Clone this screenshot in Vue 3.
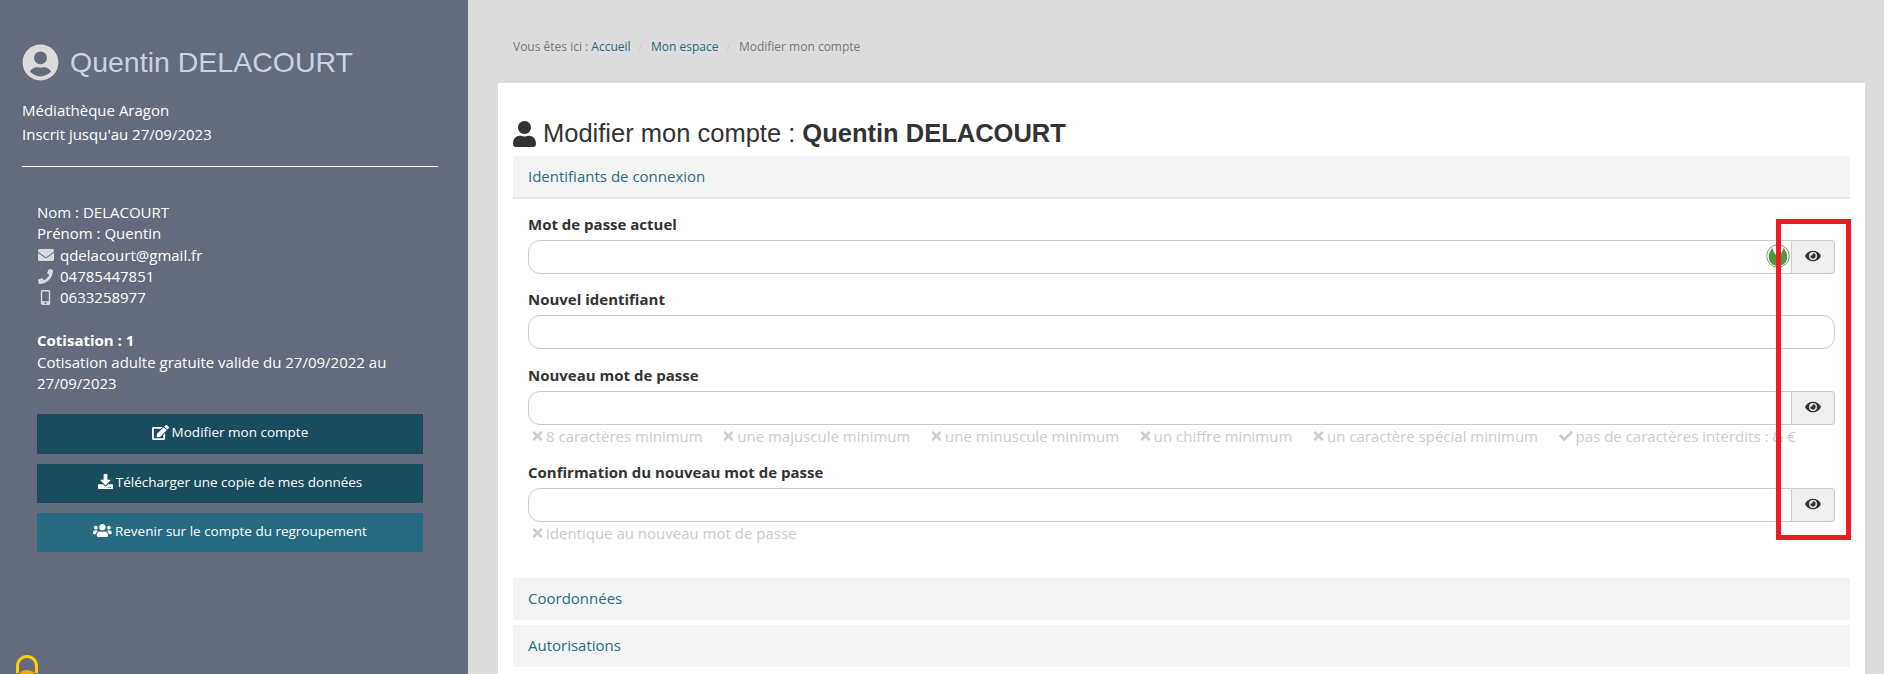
<script setup>
const icons = {
  circle: ['0 0 496 512', 'M248 8C111 8 0 119 0 256s111 248 248 248 248-111 248-248S385 8 248 8zm0 96c48.6 0 88 39.4 88 88s-39.4 88-88 88-88-39.4-88-88 39.4-88 88-88zm0 344c-58.7 0-111.3-26.6-146.5-68.2 18.8-35.4 55.6-59.8 98.5-59.8 2.4 0 4.8.4 7.1 1.1 13 4.2 26.6 6.9 40.9 6.9 14.3 0 28-2.7 40.9-6.9 2.3-.7 4.7-1.1 7.1-1.1 42.9 0 79.7 24.4 98.5 59.8C359.3 421.4 306.7 448 248 448z'],
  user: ['0 0 448 512', 'M224 256c70.7 0 128-57.3 128-128S294.7 0 224 0 96 57.3 96 128s57.3 128 128 128zm89.6 32h-16.7c-22.2 10.2-46.9 16-72.9 16s-50.6-5.8-72.9-16h-16.7C60.2 288 0 348.2 0 422.4V464c0 26.5 21.5 48 48 48h352c26.5 0 48-21.5 48-48v-41.6c0-74.2-60.2-134.4-134.4-134.4z'],
  envelope: ['0 0 512 512', 'M502.3 190.8c3.9-3.1 9.7-.2 9.7 4.7V400c0 26.5-21.5 48-48 48H48c-26.5 0-48-21.5-48-48V195.6c0-5 5.7-7.8 9.7-4.7 22.4 17.4 52.1 39.5 154.1 113.6 21.1 15.4 56.7 47.8 92.2 47.6 35.7.3 72-32.8 92.3-47.6 102-74.1 131.6-96.3 154-113.7zM256 320c23.2.4 56.6-29.2 73.4-41.4 132.7-96.3 142.8-104.7 173.4-128.7 5.8-4.5 9.2-11.5 9.2-18.9v-19c0-26.5-21.5-48-48-48H48C21.5 64 0 85.5 0 112v19c0 7.4 3.4 14.3 9.2 18.9 30.6 23.9 40.7 32.4 173.4 128.7 16.8 12.2 50.2 41.8 73.4 41.4z'],
  phone: ['0 0 512 512', 'M493.4 24.6l-104-24c-11.3-2.6-22.9 3.3-27.5 13.9l-48 112c-4.2 9.8-1.4 21.3 6.9 28l60.6 49.6c-36 76.7-98.9 140.5-177.2 177.2l-49.6-60.6c-6.8-8.3-18.2-11.1-28-6.9l-112 48C3.9 366.5-2 378.1.6 389.4l24 104C27.1 504.2 36.7 512 48 512c256.1 0 464-207.5 464-464 0-11.2-7.7-20.9-18.6-23.4z'],
  mobile: ['0 0 320 512', 'M272 0H48C21.5 0 0 21.5 0 48v416c0 26.5 21.5 48 48 48h224c26.5 0 48-21.5 48-48V48c0-26.5-21.5-48-48-48zM160 480c-17.7 0-32-14.3-32-32s14.3-32 32-32 32 14.3 32 32-14.3 32-32 32zm112-108c0 6.6-5.4 12-12 12H60c-6.6 0-12-5.4-12-12V60c0-6.6 5.4-12 12-12h200c6.6 0 12 5.4 12 12v312z'],
  edit: ['0 0 576 512', 'M402.6 83.2l90.2 90.2c3.8 3.8 3.8 10 0 13.8L274.4 405.6l-92.8 10.3c-12.4 1.4-22.9-9.1-21.5-21.5l10.3-92.8L388.8 83.2c3.8-3.8 10-3.8 13.8 0zm162-22.9l-48.8-48.8c-15.2-15.2-39.9-15.2-55.2 0l-35.4 35.4c-3.8 3.8-3.8 10 0 13.8l90.2 90.2c3.8 3.8 10 3.8 13.8 0l35.4-35.4c15.2-15.3 15.2-40 0-55.2zM384 346.2V448H64V128h229.8c3.2 0 6.2-1.3 8.5-3.5l40-40c7.6-7.6 2.2-20.5-8.5-20.5H48C21.5 64 0 85.5 0 112v352c0 26.5 21.5 48 48 48h352c26.5 0 48-21.5 48-48V306.2c0-10.7-12.9-16-20.5-8.5l-40 40c-2.2 2.3-3.5 5.3-3.5 8.5z'],
  download: ['0 0 512 512', 'M216 0h80c13.3 0 24 10.7 24 24v168h87.7c17.8 0 26.7 21.5 14.1 34.1L269.7 378.3c-7.5 7.5-19.8 7.5-27.3 0L90.1 226.1c-12.6-12.6-3.7-34.1 14.1-34.1H192V24c0-13.3 10.7-24 24-24zm296 376v112c0 13.3-10.7 24-24 24H24c-13.3 0-24-10.7-24-24V376c0-13.3 10.7-24 24-24h146.7l49 49c20.1 20.1 52.5 20.1 72.6 0l49-49H488c13.3 0 24 10.7 24 24zm-124 88c0-11-9-20-20-20s-20 9-20 20 9 20 20 20 20-9 20-20zm64 0c0-11-9-20-20-20s-20 9-20 20 9 20 20 20 20-9 20-20z'],
  users: ['0 0 640 512', 'M96 224c35.3 0 64-28.7 64-64s-28.7-64-64-64-64 28.7-64 64 28.7 64 64 64zm448 0c35.3 0 64-28.7 64-64s-28.7-64-64-64-64 28.7-64 64 28.7 64 64 64zm32 32h-64c-17.6 0-33.5 7.1-45.1 18.6 40.3 22.1 68.9 62 75.1 109.4h66c17.7 0 32-14.3 32-32v-32c0-35.3-28.7-64-64-64zm-256 0c61.9 0 112-50.1 112-112S381.9 32 320 32 208 82.1 208 144s50.1 112 112 112zm76.8 32h-8.3c-20.8 10-43.9 16-68.5 16s-47.6-6-68.5-16h-8.3C179.6 288 128 339.6 128 403.2V432c0 26.5 21.5 48 48 48h288c26.5 0 48-21.5 48-48v-28.8c0-63.6-51.6-115.2-115.2-115.2zm-223.7-13.4C161.5 263.1 145.6 256 128 256H64c-35.3 0-64 28.7-64 64v32c0 17.7 14.3 32 32 32h65.9c6.3-47.4 34.9-87.3 75.2-109.4z'],
  eye: ['0 0 576 512', 'M572.52 241.4C518.29 135.59 410.93 64 288 64S57.68 135.64 3.48 241.41a32.35 32.35 0 0 0 0 29.19C57.71 376.41 165.07 448 288 448s230.32-71.64 284.52-177.41a32.35 32.35 0 0 0 0-29.19zM288 400a144 144 0 1 1 144-144 143.93 143.93 0 0 1-144 144zm0-240a95.31 95.31 0 0 0-25.31 3.79 47.85 47.85 0 0 1-66.9 66.9A95.78 95.78 0 1 0 288 160z'],
  times: ['0 0 352 512', 'M242.72 256l100.07-100.07c12.28-12.28 12.28-32.19 0-44.48l-22.24-22.24c-12.28-12.28-32.19-12.28-44.48 0L176 189.28 75.93 89.21c-12.28-12.28-32.19-12.28-44.48 0L9.21 111.45c-12.28 12.28-12.28 32.19 0 44.48L109.28 256 9.21 356.07c-12.28 12.28-12.28 32.19 0 44.48l22.24 22.24c12.28 12.28 32.2 12.28 44.48 0L176 322.72l100.07 100.07c12.28 12.28 32.2 12.28 44.48 0l22.24-22.24c12.28-12.28 12.28-32.19 0-44.48L242.72 256z'],
  check: ['0 0 512 512', 'M173.898 439.404l-166.4-166.4c-9.997-9.997-9.997-26.206 0-36.204l36.203-36.204c9.997-9.998 26.207-9.998 36.204 0L192 312.69 432.095 72.596c9.997-9.997 26.207-9.997 36.204 0l36.203 36.204c9.997 9.997 9.997 26.206 0 36.204l-294.4 294.401c-9.998 9.997-26.207 9.997-36.204-.001z']
}

const contacts = [
  { icon: 'envelope', text: 'qdelacourt@gmail.fr' },
  { icon: 'phone', text: '04785447851' },
  { icon: 'mobile', text: '0633258977' }
]

const actions = [
  { icon: 'edit', text: 'Modifier mon compte', cls: 'dark first' },
  { icon: 'download', text: 'Télécharger une copie de mes données', cls: 'dark' },
  { icon: 'users', text: 'Revenir sur le compte du regroupement', cls: 'light' }
]

const fields = [
  { label: 'Mot de passe actuel', eye: true, leaf: true, hints: [] },
  { label: 'Nouvel identifiant', eye: false, hints: [] },
  {
    label: 'Nouveau mot de passe',
    eye: true,
    hints: [
      { icon: 'times', text: '8 caractères minimum' },
      { icon: 'times', text: 'une majuscule minimum' },
      { icon: 'times', text: 'une minuscule minimum' },
      { icon: 'times', text: 'un chiffre minimum' },
      { icon: 'times', text: 'un caractère spécial minimum' },
      { icon: 'check', text: 'pas de caractères interdits : & €' }
    ]
  },
  {
    label: 'Confirmation du nouveau mot de passe',
    eye: true,
    hints: [{ icon: 'times', text: 'identique au nouveau mot de passe' }]
  }
]
</script>

<template>
  <div class="page">
    <aside class="sidebar">
      <h2 class="who">
        <svg class="who-icon" :viewBox="icons.circle[0]"><path :d="icons.circle[1]" /></svg>
        Quentin DELACOURT
      </h2>
      <p class="line">Médiathèque Aragon</p>
      <p class="line">Inscrit jusqu'au 27/09/2023</p>
      <hr />

      <div class="infos">
        <div>Nom : DELACOURT</div>
        <div>Prénom : Quentin</div>
        <div v-for="c in contacts" :key="c.text" class="contact">
          <span class="contact-icon">
            <svg :class="c.icon" :viewBox="icons[c.icon][0]"><path :d="icons[c.icon][1]" /></svg>
          </span>
          {{ c.text }}
        </div>
        <div class="cotis"><b>Cotisation : 1</b></div>
        <div class="cotis-text">Cotisation adulte gratuite valide du 27/09/2022 au 27/09/2023</div>
      </div>

      <div class="actions">
        <a v-for="a in actions" :key="a.text" class="btn" :class="a.cls">
          <svg class="btn-icon" :viewBox="icons[a.icon][0]"><path :d="icons[a.icon][1]" /></svg>
          {{ a.text }}
        </a>
      </div>

      <svg class="lock" viewBox="0 0 22 26">
        <path d="M1.500 18V11a9.500 9.500 0 0 1 19 0v7" fill="none" stroke="#fdd000" stroke-width="3" />
        <ellipse cx="11" cy="26" rx="10.500" ry="11" fill="#f5a800" />
        <ellipse cx="11" cy="28" rx="8" ry="9" fill="#ffc700" />
      </svg>
    </aside>

    <main class="main">
      <nav class="crumbs">
        <span>Vous êtes ici : <a>Accueil</a></span>
        <i>/</i>
        <a>Mon espace</a>
        <i>/</i>
        <span>Modifier mon compte</span>
      </nav>

      <section class="card">
        <h1 class="title">
          <svg class="title-icon" :viewBox="icons.user[0]"><path :d="icons.user[1]" /></svg>
          <span>Modifier mon compte : <b>Quentin DELACOURT</b></span>
        </h1>

        <div class="panel-head open">Identifiants de connexion</div>
        <form class="panel-body" @submit.prevent>
          <div v-for="f in fields" :key="f.label" class="group">
            <label>{{ f.label }}</label>
            <div class="input-row">
              <div class="input-wrap">
                <input type="password" :class="{ joined: f.eye }" />
                <span v-if="f.leaf" class="leaf">
                  <svg viewBox="0 0 24 24">
                    <circle cx="12" cy="12" r="11.300" fill="#fff" stroke="#8a8a8a" stroke-width="1" />
                    <path d="M12 21.800C5.500 21.800 2.600 17 2.800 12.500 3 9 4.500 6 6.500 3.800 7 8 10 10 12 15c2-5 5-7 5.500-11.200 2 2.200 3.500 5.200 3.700 8.700.2 4.500-2.700 9.300-9.200 9.300z" fill="#4f9a3a" />
                  </svg>
                </span>
              </div>
              <button v-if="f.eye" type="button" class="addon">
                <svg :viewBox="icons.eye[0]"><path :d="icons.eye[1]" /></svg>
              </button>
            </div>
            <div v-if="f.hints.length" class="hints">
              <span v-for="h in f.hints" :key="h.text" class="hint">
                <svg :class="h.icon" :viewBox="icons[h.icon][0]"><path :d="icons[h.icon][1]" /></svg>{{ h.text }}
              </span>
            </div>
          </div>
        </form>

        <div class="panel-head">Coordonnées</div>
        <div class="panel-head">Autorisations</div>
      </section>
    </main>

    <div class="marker"></div>
  </div>
</template>

<style>
html, body {
  margin: 0;
  background: #fff;
}
</style>

<style scoped>
.page {
  position: relative;
  display: flex;
  width: 1884px;
  height: 674px;
  overflow: hidden;
  background: #dcdcdc;
  font-family: "Open Sans", "Liberation Sans", sans-serif;
  font-size: 15px;
  color: #333;
}

/* sidebar */
.sidebar {
  position: relative;
  flex: 0 0 468px;
  box-sizing: border-box;
  padding: 44px 30px 0 22px;
  background: #636b7c;
  color: #fff;
}
.who {
  display: flex;
  align-items: center;
  gap: 11px;
  height: 37px;
  margin: 0 0 17px;
  font-family: "Liberation Sans", Arial, sans-serif;
  font-size: 28.5px;
  font-weight: 400;
  color: #c9d3e6;
}
.who-icon {
  width: 37px;
  height: 37px;
  fill: #dcdcdc;
}
.line {
  margin: 0;
  line-height: 24px;
}
hr {
  margin: 20px 0 0;
  border: 0;
  border-top: 1px solid #fff;
}
.infos {
  margin-top: 35px;
  padding: 0 15px;
  line-height: 21.3px;
}
.contact {
  display: flex;
  align-items: center;
  gap: 6px;
}
.contact-icon {
  display: flex;
  justify-content: center;
  align-items: center;
  width: 17px;
  height: 21px;
}
.contact-icon svg {
  width: 16px;
  height: 16px;
  fill: #d6d9de;
}
.contact-icon svg.mobile {
  width: 11px;
  height: 15px;
}
.contact-icon svg.phone {
  width: 15px;
  height: 15px;
}
.cotis {
  margin-top: 22px;
}
.cotis-text {
  line-height: 21px;
}
.actions {
  display: flex;
  flex-direction: column;
  gap: 10px;
  margin: 20px 15px 0;
}
.btn {
  display: flex;
  justify-content: center;
  align-items: center;
  gap: 3px;
  height: 39px;
  padding-bottom: 3px;
  box-sizing: border-box;
  font-size: 13.5px;
  color: #fff;
}
.btn.first {
  height: 40px;
}
.btn.dark {
  background: #194c5c;
}
.btn.light {
  background: #266b82;
}
.btn-icon {
  height: 15px;
  width: auto;
  max-width: 19px;
  fill: #fff;
}
.lock {
  position: absolute;
  left: 16px;
  top: 655px;
  width: 22px;
  height: 26px;
}

/* main */
.main {
  flex: 1;
  min-width: 0;
  box-sizing: border-box;
  padding: 0 19px 0 30px;
}
.crumbs {
  display: flex;
  align-items: center;
  height: 83px;
  padding: 30px 0 20px 15px;
  box-sizing: border-box;
  font-size: 12px;
  color: #777;
}
.crumbs a {
  color: #276a80;
}
.crumbs i {
  margin: 0 8px;
  font-style: normal;
  color: #ccc;
}
.card {
  height: 591px;
  box-sizing: border-box;
  padding: 28px 15px 0;
  background: #fff;
}
.title {
  display: flex;
  align-items: center;
  gap: 7px;
  height: 45px;
  margin: 0;
  font-family: "Liberation Sans", Arial, sans-serif;
  font-size: 25.5px;
  font-weight: 400;
  color: #333;
}
.title b {
  font-weight: 700;
}
.title-icon {
  width: 23px;
  height: 26px;
  fill: #333;
}
.panel-head {
  box-sizing: border-box;
  height: 42px;
  margin-bottom: 5px;
  padding: 0 15px;
  line-height: 41px;
  background: #f4f4f4;
  color: #2a6d84;
}
.panel-head.open {
  height: 43px;
  margin: 0;
  border-bottom: 2px solid #e6e6e6;
}
.panel-body {
  height: 379px;
  box-sizing: border-box;
  padding: 15px 15px 0;
}
.group {
  margin-bottom: 15px;
}
.group:nth-child(2) {
  margin-bottom: 16px;
}
.group label {
  display: block;
  margin-bottom: 6px;
  font-weight: 700;
  line-height: 20px;
}
.input-row {
  display: flex;
  height: 34px;
}
.input-wrap {
  position: relative;
  flex: 1;
  min-width: 0;
}
.input-wrap input {
  display: block;
  width: 100%;
  height: 34px;
  box-sizing: border-box;
  border: 1px solid #ccc;
  border-radius: 12px;
  background: #fff;
  outline: none;
}
.input-wrap input.joined {
  border-radius: 12px 0 0 12px;
}
.leaf {
  position: absolute;
  top: 4px;
  right: 2px;
  width: 24px;
  height: 24px;
}
.leaf svg {
  display: block;
  width: 24px;
  height: 24px;
}
.addon {
  display: flex;
  justify-content: center;
  align-items: center;
  flex: 0 0 43px;
  box-sizing: border-box;
  padding: 0 0 2px;
  border: 1px solid #ccc;
  border-left: 0;
  border-radius: 0 4px 4px 0;
  background: #eee;
}
.addon svg {
  width: 16px;
  height: 14px;
  fill: #333;
}
.hints {
  display: flex;
  gap: 20.6px;
  height: 22px;
  line-height: 21px;
  padding-left: 4px;
  color: #ccc;
}
.hint {
  display: inline-flex;
  align-items: center;
  white-space: nowrap;
}
.hint svg {
  width: 11px;
  height: 14px;
  margin-right: 3px;
  fill: #ccc;
}
.hint svg.check {
  width: 14px;
}

/* annotation drawn over the screenshot */
.marker {
  position: absolute;
  left: 1776px;
  top: 219px;
  width: 75px;
  height: 321px;
  box-sizing: border-box;
  border: 5px solid #ed1c24;
  pointer-events: none;
}
</style>
